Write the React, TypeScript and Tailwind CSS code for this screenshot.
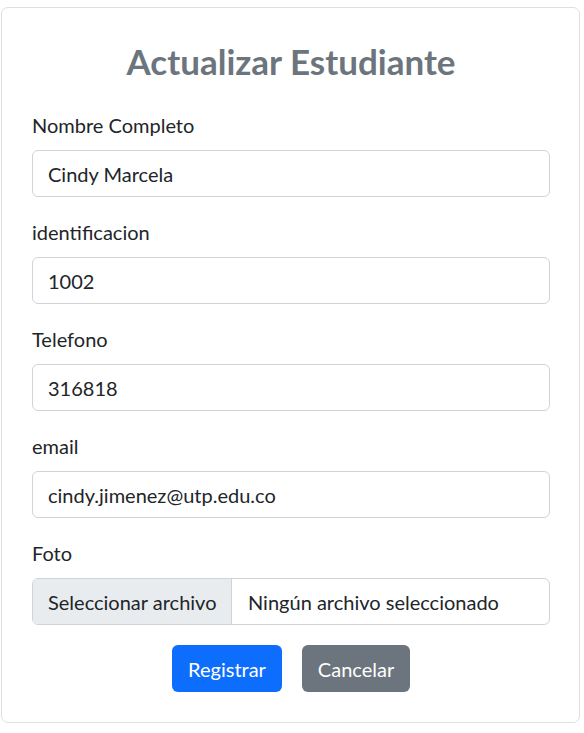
import React from "react";

function Field({ label, value }: { label: string; value: string }) {
  return (
    <div className="mb-[20px]">
      <label className="mb-[10px] block leading-[30px]">{label}</label>
      <div className="h-[47px] rounded-[6px] border border-[#ced4da] bg-white px-[15px] py-[7.5px] leading-[30px] text-[#212529]">
        {value}
      </div>
    </div>
  );
}

export default function App() {
  return (
    <div
      className="bg-white pt-[7px] pl-[1px] text-[20px] text-[#212529]"
      style={{ fontFamily: "Lato, 'Noto Sans', sans-serif" }}
    >
      <div className="w-[579px] rounded-[7px] border border-[#dfdfdf] pl-[30px] pr-[29px] pt-[29px] pb-[30px]">
        <h2 className="mb-[25px] text-center text-[35px] font-bold leading-[48px] text-[#6c757d]">
          Actualizar Estudiante
        </h2>
        <Field label="Nombre Completo" value="Cindy Marcela" />
        <Field label="identificacion" value="1002" />
        <Field label="Telefono" value="316818" />
        <Field label="email" value="cindy.jimenez@utp.edu.co" />
        <div className="mb-[20px]">
          <label className="mb-[10px] block leading-[30px]">Foto</label>
          <div className="flex h-[47px] overflow-hidden rounded-[6px] border border-[#ced4da] bg-white leading-[30px]">
            <div className="w-[199px] shrink-0 border-r border-[#ced4da] bg-[#e9ecef] px-[15px] py-[7.5px] whitespace-nowrap">
              Seleccionar archivo
            </div>
            <div className="px-[16px] py-[7.5px] whitespace-nowrap">Ningún archivo seleccionado</div>
          </div>
        </div>
        <div className="flex justify-center gap-[20px]">
          <button className="h-[47px] w-[110px] rounded-[6px] bg-[#0d6efd] leading-[30px] text-white">
            Registrar
          </button>
          <button className="h-[47px] w-[108px] rounded-[6px] bg-[#6c757d] leading-[30px] text-white">
            Cancelar
          </button>
        </div>
      </div>
    </div>
  );
}
